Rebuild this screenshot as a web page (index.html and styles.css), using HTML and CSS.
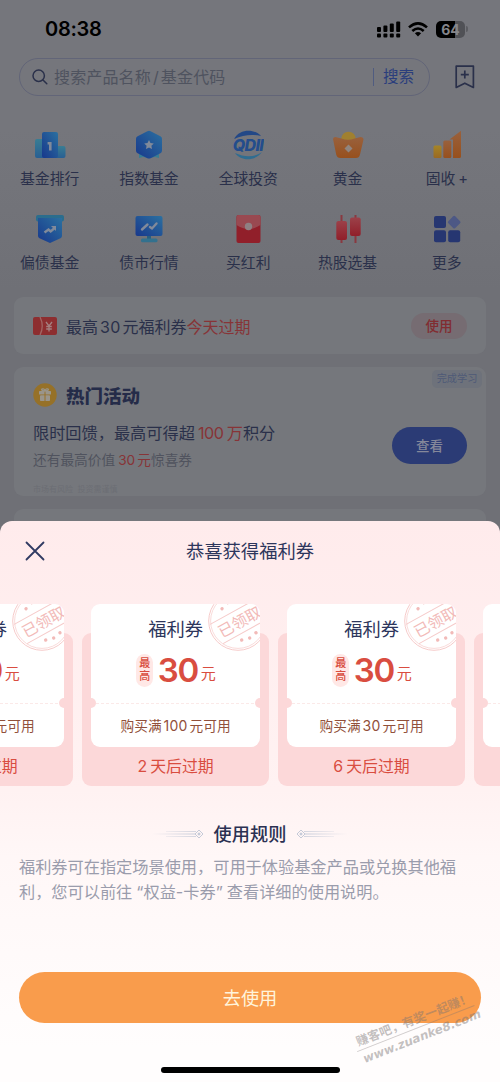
FILE: index.html
```html
<!DOCTYPE html>
<html lang="zh-CN">
<head>
<meta charset="utf-8">
<title>恭喜获得福利券</title>
<link rel="stylesheet" href="styles.css">
</head>
<body>
<svg width="0" height="0" class="defs">
  <defs>
    <linearGradient id="blue" x1="1" y1="0" x2="0" y2="1"><stop offset="0" stop-color="#2b70a0"/><stop offset="1" stop-color="#18388c"/></linearGradient>
    <linearGradient id="teal" x1="0" y1="0" x2="0" y2="1"><stop offset="0" stop-color="#397d93"/><stop offset="1" stop-color="#285f93"/></linearGradient>
    <linearGradient id="gold" x1="0" y1="0" x2="0" y2="1"><stop offset="0" stop-color="#99613d"/><stop offset="1" stop-color="#97501d"/></linearGradient>
    <linearGradient id="yellow" x1="0" y1="0" x2="0" y2="1"><stop offset="0" stop-color="#a58527"/><stop offset="1" stop-color="#9a6923"/></linearGradient>
    <linearGradient id="red" x1="0" y1="0" x2="0" y2="1"><stop offset="0" stop-color="#9b4149"/><stop offset="1" stop-color="#911f2a"/></linearGradient>
    <linearGradient id="fadeL"><stop offset="0" stop-color="#c5cad8" stop-opacity="0"/><stop offset="1" stop-color="#c5cad8"/></linearGradient>
  </defs>
  <symbol id="stamp" viewBox="0 0 60 60">
    <g fill="none" stroke="#f6cbca" stroke-width="1">
      <circle cx="30" cy="30" r="29.3"/><circle cx="30" cy="30" r="27.4" stroke-width=".7"/>
      <g transform="rotate(-29 30 30)"><path d="M4 19.500H56M6 42.500H54"/></g>
    </g>
    <g transform="rotate(-29 30 30)" fill="#f2bab8">
      <text x="31" y="37" text-anchor="middle" class="stamp-text">已领取</text>
      <circle cx="24" cy="48.500" r="1.700"/><circle cx="32" cy="50.500" r="1.700"/><circle cx="40" cy="49" r="1.700"/>
      <circle cx="22" cy="11.500" r="1.700"/><circle cx="30" cy="9" r="1.700"/><circle cx="38" cy="11.500" r="1.700"/>
    </g>
  </symbol>
</svg>
<div class="screen">
  <header class="status">
    <span class="time">08:38</span>
    <svg class="signal" width="24" height="17" viewBox="0 0 24 17" fill="#000">
      <rect x="0" y="6" width="4" height="5" rx="1"/><rect x="6.4" y="4.5" width="4" height="6.5" rx="1"/><rect x="12.8" y="2.6" width="4" height="8.4" rx="1"/><rect x="19.2" y="0.5" width="4" height="10.5" rx="1"/>
      <rect x="0" y="12.6" width="4" height="4" rx="1"/><rect x="6.4" y="12.6" width="4" height="4" rx="1"/><rect x="12.8" y="12.6" width="4" height="4" rx="1"/><rect x="19.2" y="12.6" width="4" height="4" rx="1"/>
    </svg>
    <svg class="wifi" width="20" height="15" viewBox="0 0 20 15" fill="none" stroke="#000" stroke-width="2.600">
      <path d="M1 5.400Q10-2.600 19 5.400"/><path d="M4.300 9Q10 4 15.700 9"/><path d="M6.900 11.300Q10 8.600 13.100 11.300L10 14.600Z" fill="#000" stroke="none"/>
    </svg>
    <span class="battery">64</span><i class="battery-tip"></i>
  </header>

  <div class="search-row">
    <div class="search">
      <svg width="16" height="16" viewBox="0 0 16 16" fill="none" stroke="#2a304a" stroke-width="1.500" stroke-linecap="round"><circle cx="6.700" cy="6.700" r="5.700"/><path d="M11 11l3.800 3.800"/></svg>
      <span class="placeholder">搜索产品名称<b>/</b>基金代码</span>
      <span class="search-btn">搜索</span>
    </div>
    <svg width="20" height="24" viewBox="0 0 20 24" fill="none" stroke="#2a304a" stroke-width="1.700" stroke-linejoin="round"><path d="M1.200 1.200H18.400V22.400L9.800 18.200L1.200 22.400Z"/><path d="M9.800 5.600v8M5.800 9.600h8"/></svg>
  </div>

  <nav class="grid">
    <div class="item"><svg viewBox="0 0 32 32"><rect x="1" y="9" width="12" height="19" rx="2" fill="url(#teal)"/><rect x="20" y="16" width="11.500" height="12" rx="2" fill="url(#teal)"/><rect x="8" y="2" width="16" height="26" rx="2" fill="url(#blue)"/><path d="M13.600 12h4v8.500h-2.600v-6h-1.400z" fill="#818a9a"/></svg><span>基金排行</span></div>
    <div class="item"><svg viewBox="0 0 32 32"><path d="M6 22h20v6l-4-1-6 1-6-1-4 1z" fill="#397d93"/><path d="M14.400 1.200q1.600-.9 3.200 0l9.800 5q1.600.9 1.600 2.500v12q0 1.600-1.600 2.500l-9.800 5q-1.600.7-3.200 0l-9.800-5Q3 22.300 3 20.700v-12Q3 7.100 4.600 6.200z" fill="url(#blue)"/><path d="M16 10l1.500 3 3.300.5-2.400 2.300.6 3.300-3-1.600-3 1.600.6-3.300-2.400-2.300 3.300-.5z" fill="#818a9a"/></svg><span>指数基金</span></div>
    <div class="item"><svg viewBox="0 0 32 32"><path d="M2 9C8-2 23-1 29 6C20 4 11 5 2 9Z" fill="#234887"/><path d="M3 23C12 27 22 28 30 22C23 31.500 9 31.500 3 23Z" fill="#306d91"/><text x="16" y="21" text-anchor="middle" class="qd">QDII</text></svg><span>全球投资</span></div>
    <div class="item"><svg viewBox="0 0 32 32"><circle cx="16.500" cy="9" r="7.300" fill="#a08030"/><path d="M1 9q0-2 2.500-2l6 1.600q6.500 2.500 13 0l6-1.600q3 0 3 2.500l-3.500 15q-.8 3.500-4 3.500H8.500q-3.500 0-4.300-3.500z" fill="url(#gold)"/><path d="M16.500 14.500l4 4-4 4-4-4z" fill="#8f8580"/></svg><span>黄金</span></div>
    <div class="item"><svg viewBox="0 0 32 32"><rect x="2.500" y="15.500" width="8" height="12.500" rx="1.500" fill="url(#yellow)"/><rect x="12.300" y="10.500" width="8" height="17.500" rx="1.500" fill="url(#gold)"/><path d="M22 28V9.500h-3.500L30 .8V26.500q0 1.500-1.500 1.500z" fill="url(#gold)"/></svg><span>固收<em>+</em></span></div>
    <div class="item"><svg viewBox="0 0 32 32"><rect x="2" y="1" width="28" height="6.500" rx="2" fill="#2b6d8d"/><path d="M4 4H28V22q0 1.500-1.500 2.300L16 29 5.500 24.300Q4 23.500 4 22z" fill="url(#blue)"/><path d="M10.500 18.500l4-3 2.200 2 4.500-4" fill="none" stroke="#818a9a" stroke-width="2.400"/><path d="M17 12h5v5z" fill="#818a9a"/></svg><span>偏债基金</span></div>
    <div class="item"><svg viewBox="0 0 32 32"><rect x="2.500" y="2" width="27" height="20" rx="2" fill="url(#blue)"/><path d="M14 22h4v3h-4z" fill="#285f80"/><rect x="8" y="24.500" width="16.500" height="3.700" rx="1.500" fill="#33718e"/><path d="M9 15.500l5.500-5M17 13l2 1.500 4.500-5" fill="none" stroke="#818a9a" stroke-width="2.400" stroke-linecap="round"/></svg><span>债市行情</span></div>
    <div class="item"><svg viewBox="0 0 32 32"><rect x="4.500" y="1" width="24" height="28" rx="2" fill="#911f2a"/><path d="M4.500 3q0-2 2-2h20q2 0 2 2v8Q16.500 19 4.500 11z" fill="#994951"/><circle cx="16.500" cy="12.500" r="3.700" fill="#8f8083"/></svg><span>买红利</span></div>
    <div class="item"><svg viewBox="0 0 32 32"><path d="M9.500 1v28M23.500 1v28" stroke="#893940" stroke-width="2"/><rect x="4.300" y="7" width="10.700" height="19" rx="2" fill="url(#red)"/><rect x="18" y="3.500" width="10.700" height="18.500" rx="2" fill="url(#red)"/></svg><span>热股选基</span></div>
    <div class="item"><svg viewBox="0 0 32 32" fill="#263671"><rect x="3" y="2" width="12" height="12" rx="2"/><rect x="3" y="16.300" width="12" height="12" rx="2"/><rect x="17.200" y="16.300" width="12" height="12" rx="2"/><rect x="18.300" y="3.300" width="9.800" height="9.800" rx="1.500" transform="rotate(45 23.200 8.200)" fill="#4d5885"/></svg><span>更多</span></div>
  </nav>

  <section class="card notice">
    <svg width="24" height="18" viewBox="0 0 24 18"><rect width="24" height="18" rx="2" fill="#8d2e30"/><path d="M7 0q4.500 9 0 18" fill="none" stroke="#a26664" stroke-width="1.300"/><path d="M13 5l3 4 3-4M16 9v5.500M13.200 9.500h5.600M13.200 12h5.600" fill="none" stroke="#a48080" stroke-width="1.300"/></svg>
    <p>最高<b>30</b>元福利券<em>今天过期</em></p>
    <span class="use">使用</span>
  </section>

  <section class="card event">
    <span class="tag">完成学习</span>
    <div class="event-title">
      <svg width="24" height="24" viewBox="0 0 24 24"><circle cx="12" cy="12" r="11.700" fill="#967128"/><g fill="#9a958b"><rect x="6" y="8" width="12" height="3.500" rx=".6"/><rect x="7" y="12.300" width="10" height="5.700" rx=".8"/></g><path d="M12 8v10" stroke="#967128" stroke-width="1"/><path d="M12 8Q7.500 7.500 9 6q2-.8 3 2Q13 5 15 6q1.500 1.500-3 2" fill="none" stroke="#9a958b" stroke-width="1.200"/></svg>
      <h2>热门活动</h2>
    </div>
    <div class="event-body">
      <div>
        <p class="line1">限时回馈，最高可得超<em><b>100</b>万</em>积分</p>
        <p class="line2">还有最高价值<em><b>30</b>元</em>惊喜券</p>
      </div>
      <span class="look">查看</span>
    </div>
    <p class="small">市场有风险&nbsp; 投资需谨慎</p>
  </section>
  <section class="card next"></section>
</div>

<main class="sheet">
  <div class="sheet-head">
    <svg width="20" height="20" viewBox="0 0 20 20" stroke="#303a62" stroke-width="1.800" stroke-linecap="round"><path d="M1.500 1.500l17 17M18.500 1.500l-17 17"/></svg>
    <h1>恭喜获得福利券</h1>
  </div>
  <div class="rail">
    <article class="coupon"><div class="ticket"><h3>福利券</h3><div class="amount"><span class="max">最<br>高</span><strong>30</strong><span>元</span></div><div class="cut"></div><p>购买满<b>100</b>元可用</p><svg class="stamp"><use href="#stamp"/></svg></div><footer><b>2</b>天后过期</footer></article>
    <article class="coupon"><div class="ticket"><h3>福利券</h3><div class="amount"><span class="max">最<br>高</span><strong>30</strong><span>元</span></div><div class="cut"></div><p>购买满<b>100</b>元可用</p><svg class="stamp"><use href="#stamp"/></svg></div><footer><b>2</b>天后过期</footer></article>
    <article class="coupon"><div class="ticket"><h3>福利券</h3><div class="amount"><span class="max">最<br>高</span><strong>30</strong><span>元</span></div><div class="cut"></div><p>购买满<b>30</b>元可用</p><svg class="stamp"><use href="#stamp"/></svg></div><footer><b>6</b>天后过期</footer></article>
    <article class="coupon"><div class="ticket"><div class="cut last"></div></div></article>
  </div>
  <div class="rules-title">
    <svg width="52" height="10" viewBox="0 0 52 10" fill="none"><path d="M14 2h30v.8H14zM0 4.600h43v.8H0zM14 7.200h30v.8H14z" fill="url(#fadeL)"/><path d="M47 1l4 4-4 4-4-4z" stroke="#c5cad8"/><path d="M47 3.200l1.800 1.800-1.800 1.800-1.800-1.800z" fill="#c5cad8"/></svg>
    <h2>使用规则</h2>
    <svg class="flip" width="52" height="10" viewBox="0 0 52 10" fill="none"><path d="M14 2h30v.8H14zM0 4.600h43v.8H0zM14 7.200h30v.8H14z" fill="url(#fadeL)"/><path d="M47 1l4 4-4 4-4-4z" stroke="#c5cad8"/><path d="M47 3.200l1.800 1.800-1.800 1.800-1.800-1.800z" fill="#c5cad8"/></svg>
  </div>
  <p class="rules">福利券可在指定场景使用，可用于体验基金产品或兑换其他福<br>利，您可以前往<i>“</i>权益<i class="dash">-</i>卡券<i class="close">”</i>查看详细的使用说明。</p>
  <div class="cta">去使用</div>
  <div class="home"></div>
  <div class="watermark"><span>赚客吧，有奖一起赚！</span><span class="url">www.zuanke8.com</span></div>
</main>
</body>
</html>
```
FILE: styles.css
```css
* { box-sizing: border-box; margin: 0; padding: 0; }
body {
  width: 500px; height: 1082px; overflow: hidden; position: relative;
  font-family: Inter, "Noto Sans CJK SC", sans-serif; background: #6f7075;
}
b, em, i { font-weight: inherit; font-style: normal; }
.defs { position: absolute; }
.screen { height: 1082px; background: linear-gradient(#75767c 0, #75767c 130px, #6f7076 290px); color: #2a304a; }

.status { height: 58px; display: flex; align-items: center; padding: 0 32px 0 45px; color: #000; }
.time { font-size: 20px; font-weight: 600; letter-spacing: -.3px; margin-right: auto; }
.signal { margin-right: 7px; }
.wifi { margin-right: 8px; }
.battery {
  width: 29px; height: 17px; border-radius: 5px; text-align: center;
  background: linear-gradient(90deg, #000 64%, #505156 64%);
  color: #85868b; font-size: 14px; font-weight: 700; line-height: 17px;
}
.battery-tip { width: 2px; height: 6px; margin-left: 1px; border-radius: 0 3px 3px 0; background: #5b5c61; }

.search-row { display: flex; align-items: center; justify-content: space-between; padding: 0 25px 0 19px; height: 38px; }
.search { width: 411px; height: 38px; border: 1px solid #626578; border-radius: 19px; display: flex; align-items: center; padding: 0 15px 0 12px; }
.placeholder { flex: 1; margin-left: 6px; font-size: 16px; line-height: 20px; letter-spacing: .15px; color: #4f535f; }
.placeholder b { margin: 0 2px; }
.search-btn { border-left: 1px solid #505c80; padding-left: 9px; line-height: 18px; font-size: 15.500px; color: #2b3e7c; }

.grid { display: grid; grid-template-columns: repeat(5, 99.300px); grid-auto-rows: 84px; margin-top: 34px; height: 167px; }
.item { display: flex; flex-direction: column; align-items: center; font-size: 14.800px; line-height: 22px; }
.item svg { width: 32px; height: 32px; margin-bottom: 6px; }
.item em { margin-left: 3px; }
.qd { font: italic 800 16px Inter, sans-serif; fill: #234d8c; letter-spacing: -.6px; }

.card { margin: 0 14px; border-radius: 9px; background: #75777c; }
.notice { height: 57px; display: flex; align-items: center; padding: 0 19px 0 19px; }
.notice p { flex: 1; margin-left: 9px; font-size: 16px; }
.notice b { margin: 0 2px; letter-spacing: .3px; }
.card em { color: #873437; }
.use { width: 56px; height: 26px; border-radius: 13px; background: #766c72; color: #812d31; text-align: center; font-size: 13.500px; line-height: 26px; font-weight: 500; }
.event { position: relative; height: 129px; margin-top: 13px; padding: 16px 19px 0; }
.tag { position: absolute; right: 4px; top: 3px; width: 50px; height: 18px; border-radius: 5px; background: #6e727b; color: #4f5a77; text-align: center; font-size: 10.200px; line-height: 17px; }
.event-title { display: flex; align-items: center; height: 24px; }
.event-title h2 { margin-left: 9px; font-size: 18.500px; font-weight: 900; color: #252c49; }
.event-body { display: flex; justify-content: space-between; align-items: flex-start; height: 62px; padding-top: 15px; }
.line1 { font-size: 16.200px; line-height: 23px; }
.line1 b { margin: 0 3px 0 3px; letter-spacing: -.4px; }
.line2 { margin-top: 4px; font-size: 13.700px; line-height: 22px; color: #50535e; }
.line2 b { margin: 0 2px 0 3px; }
.look { width: 75px; height: 37px; margin-top: 5px; border-radius: 19px; background: #2b3b75; color: #85889a; text-align: center; font-size: 13.500px; font-weight: 500; line-height: 38px; }
.event .small { margin-top: 14px; font-size: 8px; line-height: 12px; color: #6c6e74; }
.next { height: 60px; margin-top: 13px; }

.sheet {
  position: absolute; left: 0; top: 521px; width: 500px; height: 561px;
  border-radius: 12px 12px 0 0; overflow: hidden;
  background: linear-gradient(#ffebec, #fff2f2 48%, #fff7f7 60%, #fffdfd 94%);
}
.sheet-head { height: 60px; display: flex; align-items: center; padding: 0 25px; }
.sheet-head h1 { flex: 1; margin-right: 20px; text-align: center; font-size: 18.300px; line-height: 26px; font-weight: 400; color: #2d365c; }
.rail { display: flex; gap: 9.500px; width: 800px; margin-left: -113.700px; padding-top: 52px; }
.coupon { width: 186.500px; height: 153px; flex: none; padding: 0 9px; border-radius: 9px; background: #fcd8d9; }
.ticket { position: relative; height: 143px; margin-top: -29px; border-radius: 9px; background: #fff; overflow: hidden; text-align: center; }
.ticket h3 { padding-top: 11px; line-height: 28px; font-size: 18.300px; font-weight: 400; color: #2d365c; }
.amount { display: flex; align-items: center; height: 54px; padding-left: 45px; color: #d94d40; }
.max { width: 17px; height: 33px; padding-top: 3px; border-radius: 9px; background: #ffe8e6; font-size: 11px; line-height: 13.700px; font-weight: 500; }
.amount strong { margin: -1px 0 0 4.500px; font-size: 33px; font-weight: 600; letter-spacing: -1.400px; }
.amount span:last-child { margin: 4px 0 0 3px; font-size: 15px; }
.cut { display: flex; justify-content: space-between; align-items: center; height: 14px; margin: -1px -5px 0; background: repeating-linear-gradient(90deg, #fbe9e8 0 3px, transparent 3px 5px) 0 50% / 100% 1px no-repeat; }
.cut::before, .cut::after { content: ""; width: 10px; height: 10px; border-radius: 50%; background: #fcd8d9; }
.cut.last { margin-top: 92px; }
.ticket p { padding-top: 4px; font-size: 13.700px; line-height: 23px; color: #91503a; white-space: nowrap; }
.ticket p b { margin: 0 2px; font-size: 14px; letter-spacing: .2px; }
.stamp { position: absolute; left: 117px; top: -13px; width: 60px; height: 60px; }
.stamp-text { font-size: 15.500px; }
.coupon footer { text-align: center; font-size: 15.900px; line-height: 40px; color: #d94d40; }
.coupon footer b { margin-right: 3px; }
.rules-title { display: flex; align-items: center; justify-content: center; gap: 10px; height: 30px; margin-top: 33px; }
.rules-title h2 { font-size: 18.200px; font-weight: 500; line-height: 28px; color: #2b3152; }
.flip { transform: scaleX(-1); }
.rules { margin: 6px 0 0 19px; white-space: nowrap; font-size: 16.200px; line-height: 25px; color: #9a9cac; }
.rules i { margin-left: 4px; }
.rules i.dash { margin: 0; }
.rules i.close { margin: 0 4px 0 0; }
.cta { height: 51px; margin: 67px 19px 0; border-radius: 26px; background: #f99c4c; color: #fff4dc; text-align: center; font-size: 18.200px; line-height: 52px; }
.home { width: 179px; height: 6px; margin: 44px auto 0; border-radius: 3px; background: #000; }
.watermark { position: absolute; left: 353px; top: 490px; width: 126px; transform: rotate(-21.500deg); color: rgba(120, 115, 115, .45); }
.watermark span { display: block; white-space: nowrap; font-size: 12.300px; font-weight: 700; line-height: 17px; padding-left: 3px; }
.watermark .url { border-top: 1px solid rgba(120, 115, 115, .35); font: italic 700 12px/18px "DejaVu Sans", sans-serif; }
```
